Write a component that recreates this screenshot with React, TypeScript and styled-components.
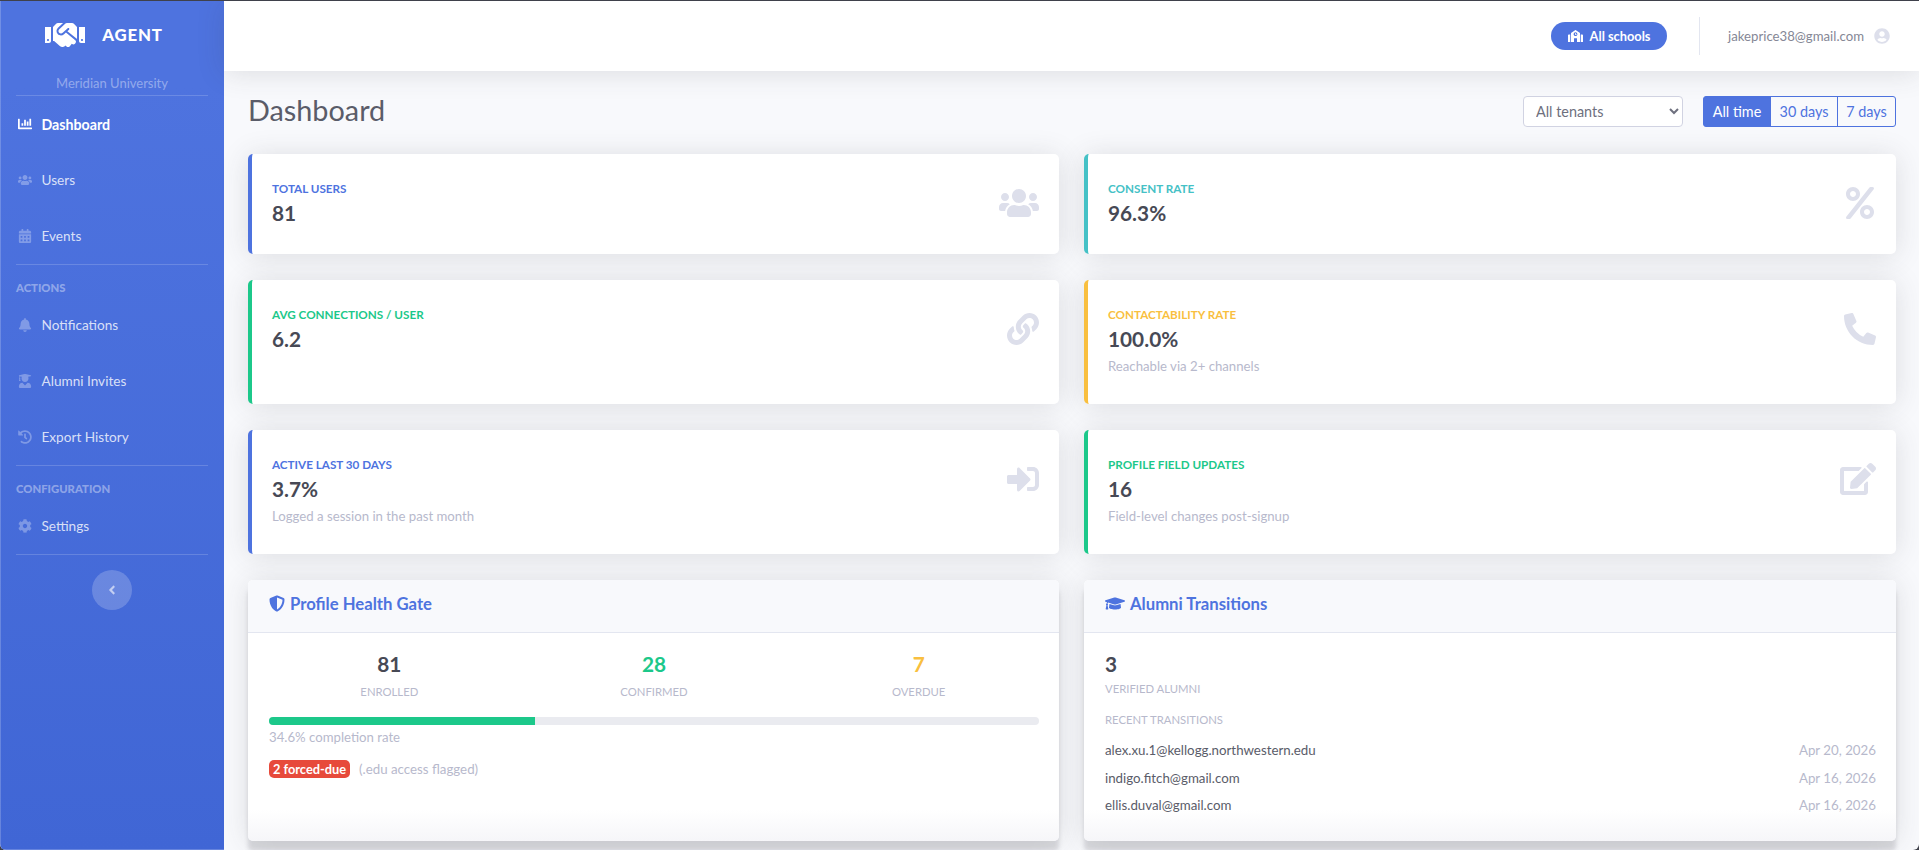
import styled, { createGlobalStyle } from "styled-components";
import type { ReactNode } from "react";
import {
  FaAngleLeft,
  FaBell,
  FaCalendarAlt,
  FaChartBar,
  FaCog,
  FaEdit,
  FaGraduationCap,
  FaHandshake,
  FaHistory,
  FaLink,
  FaPercent,
  FaPhoneAlt,
  FaSchool,
  FaShieldAlt,
  FaSignInAlt,
  FaUserCircle,
  FaUserGraduate,
  FaUsers,
} from "react-icons/fa";

const FONT = `Lato, "Noto Sans", sans-serif`;

const colors = {
  primary: "#4e73df",
  success: "#1cc88a",
  info: "#45c1c6",
  warning: "#f9bf3f",
  danger: "#e74a3b",
  dark: "#474955",
  muted: "#b7b9cc",
  line: "#e3e6f0",
  iconGray: "#dddfeb",
};

const GlobalStyle = createGlobalStyle`
  html, body {
    margin: 0;
    padding: 0;
    height: 100%;
    background: #3f414b;
    overflow: hidden;
  }
  #root {
    height: 100%;
  }
  * {
    box-sizing: border-box;
  }
`;

const Frame = styled.div`
  display: flex;
  height: 849px;
  margin-top: 1px;
  overflow: hidden;
  border-radius: 0 0 6px 6px;
  background: #f8f9fc;
  font-family: ${FONT};
`;

const Sidebar = styled.aside`
  flex: 0 0 224px;
  display: flex;
  flex-direction: column;
  padding: 0 16px;
  background: linear-gradient(180deg, #4e73df 10%, #4066d5 100%);
  box-shadow: inset 1px 0 0 rgba(255, 255, 255, 0.2), inset 0 -1px 0 rgba(255, 255, 255, 0.2);
  color: #fff;
`;

const Brand = styled.div`
  height: 67px;
  display: flex;
  align-items: center;
  justify-content: center;
  gap: 17px;
  padding-right: 16px;
  font-size: 16.8px;
  font-weight: 900;
  letter-spacing: 0.8px;
  svg {
    width: 40px;
    height: 32px;
  }
`;

const SchoolName = styled.div`
  height: 27px;
  padding-top: 6px;
  text-align: center;
  font-size: 13px;
  line-height: 18px;
  color: rgba(255, 255, 255, 0.4);
`;

const SideDivider = styled.hr`
  width: 100%;
  margin: 0;
  border: 0;
  border-top: 1px solid rgba(255, 255, 255, 0.17);
`;

const NavItem = styled.div<{ $active?: boolean }>`
  height: 56px;
  display: flex;
  align-items: center;
  gap: 9.5px;
  padding-left: 2px;
  font-size: ${(p) => (p.$active ? 14.2 : 13.6)}px;
  font-weight: ${(p) => (p.$active ? 700 : 400)};
  color: ${(p) => (p.$active ? "#fff" : "rgba(255, 255, 255, 0.8)")};
  svg {
    width: 14px;
    height: 14px;
    flex: none;
    color: ${(p) => (p.$active ? "#fff" : "rgba(255, 255, 255, 0.3)")};
  }
`;

const NavHeading = styled.div`
  height: 18px;
  margin-top: 14px;
  font-size: 11.3px;
  line-height: 18px;
  font-weight: 900;
  color: rgba(255, 255, 255, 0.4);
  text-transform: uppercase;
`;

const ToggleWrap = styled.div`
  display: flex;
  justify-content: center;
  padding-top: 15px;
`;

const Toggle = styled.button`
  width: 40px;
  height: 40px;
  padding: 0;
  display: flex;
  align-items: center;
  justify-content: center;
  border: 0;
  border-radius: 50%;
  background: rgba(255, 255, 255, 0.2);
  color: rgba(255, 255, 255, 0.6);
  font-size: 14px;
`;

const Main = styled.div`
  flex: 1;
  min-width: 0;
  display: flex;
  flex-direction: column;
`;

const Topbar = styled.header`
  height: 70px;
  flex: none;
  position: relative;
  z-index: 1;
  display: flex;
  align-items: center;
  justify-content: flex-end;
  padding-right: 29px;
  background: #fff;
  box-shadow: 0 2px 28px rgba(58, 59, 69, 0.15);
`;

const SchoolPill = styled.div`
  height: 28px;
  width: 116px;
  display: flex;
  align-items: center;
  justify-content: center;
  gap: 7px;
  border-radius: 14px;
  background: ${colors.primary};
  color: #fff;
  font-size: 12.8px;
  font-weight: 700;
  svg {
    width: 15px;
    height: 12px;
  }
`;

const TopDivider = styled.div`
  width: 1px;
  height: 38px;
  margin: 0 28px 0 32px;
  background: ${colors.line};
`;

const UserEmail = styled.span`
  font-size: 13.2px;
  color: #858796;
`;

const Avatar = styled(FaUserCircle)`
  width: 16px;
  height: 16px;
  margin-left: 10px;
  color: ${colors.iconGray};
`;

const Content = styled.main`
  flex: 1;
  padding: 24px 23px 0 24px;
`;

const TitleRow = styled.div`
  height: 33px;
  margin-bottom: 26px;
  display: flex;
  align-items: center;
`;

const Title = styled.h1`
  flex: 1;
  margin: 0;
  padding-bottom: 2px;
  font-size: 28.8px;
  line-height: 33px;
  font-weight: 400;
  color: #5a5c69;
`;

const TenantSelect = styled.select`
  width: 160px;
  height: 31px;
  padding: 0 8px;
  border: 1px solid #d1d3e2;
  border-radius: 4px;
  background: #fff;
  color: #6e707e;
  font-family: ${FONT};
  font-size: 14.4px;
`;

const RangeGroup = styled.div`
  display: flex;
  margin-left: 20px;
`;

const RangeButton = styled.button<{ $active?: boolean; $w: number }>`
  width: ${(p) => p.$w}px;
  height: 31px;
  padding: 0;
  margin-left: -1px;
  border: 1px solid ${colors.primary};
  background: ${(p) => (p.$active ? colors.primary : "transparent")};
  color: ${(p) => (p.$active ? "#fff" : colors.primary)};
  font-family: ${FONT};
  font-size: 14.4px;
  &:first-child {
    margin-left: 0;
    border-radius: 3px 0 0 3px;
  }
  &:last-child {
    border-radius: 0 3px 3px 0;
  }
`;

const CardGrid = styled.div`
  display: grid;
  grid-template-columns: 811px 812px;
  column-gap: 25px;
  row-gap: 26px;
`;

const StatBox = styled.section<{ $accent: string }>`
  display: flex;
  justify-content: space-between;
  padding: 28px 20px 29px 20px;
  border-left: 4px solid ${(p) => p.$accent};
  border-radius: 5px;
  background: #fff;
  box-shadow: 0 2px 28px rgba(58, 59, 69, 0.15);
`;

const StatLabel = styled.div<{ $accent: string }>`
  height: 14px;
  font-size: 11.7px;
  line-height: 12px;
  font-weight: 700;
  color: ${(p) => p.$accent};
  text-transform: uppercase;
`;

const StatValue = styled.div`
  height: 24px;
  margin-top: 5px;
  font-size: 20.8px;
  line-height: 24px;
  font-weight: 700;
  color: ${colors.dark};
`;

const StatNote = styled.div`
  margin-top: 6px;
  font-size: 13.2px;
  line-height: 18px;
  color: ${colors.muted};
`;

const StatIcon = styled.div<{ $w: number }>`
  height: 32px;
  margin-top: 5px;
  color: ${colors.iconGray};
  svg {
    display: block;
    height: 32px;
    width: ${(p) => p.$w}px;
  }
`;

const Panel = styled.section`
  height: 261px;
  border-radius: 5px;
  overflow: hidden;
  background: linear-gradient(180deg, #fff 88%, #f6f6f9 100%);
  box-shadow: 0 2px 28px rgba(58, 59, 69, 0.15), 0 10px 4px 0 rgba(58, 59, 69, 0.16);
`;

const PanelHead = styled.div`
  height: 53px;
  display: flex;
  align-items: center;
  gap: 5px;
  padding: 0 0 5px 21px;
  background: #f8f9fc;
  border-bottom: 1px solid ${colors.line};
  color: ${colors.primary};
  font-size: 16.7px;
  font-weight: 700;
`;

const HeadIcon = styled.span<{ $w: number }>`
  display: flex;
  svg {
    width: ${(p) => p.$w}px;
    height: 17px;
  }
`;

const PanelBody = styled.div`
  padding: 19px 20px 0 21px;
`;

const TripleStats = styled.div`
  display: grid;
  grid-template-columns: repeat(3, 1fr);
  margin: 0 -12px;
  text-align: center;
`;

const BigNumber = styled.div<{ $color?: string }>`
  height: 24px;
  font-size: 20.8px;
  line-height: 24px;
  font-weight: 700;
  color: ${(p) => p.$color ?? colors.dark};
`;

const SmallCaps = styled.div`
  margin-top: 8px;
  font-size: 11.3px;
  line-height: 16px;
  color: ${colors.muted};
  text-transform: uppercase;
`;

const ProgressTrack = styled.div`
  height: 8px;
  margin-top: 17px;
  border-radius: 4px;
  overflow: hidden;
  background: #eaebf0;
`;

const ProgressFill = styled.div`
  height: 100%;
  background: ${colors.success};
`;

const ProgressNote = styled.div`
  margin-top: 3px;
  font-size: 13.2px;
  line-height: 18px;
  color: ${colors.muted};
`;

const FlagRow = styled.div`
  display: flex;
  align-items: center;
  gap: 9px;
  margin-top: 14px;
  font-size: 13.3px;
  color: ${colors.muted};
`;

const Badge = styled.span`
  height: 18px;
  width: 81px;
  display: flex;
  align-items: center;
  justify-content: center;
  border-radius: 5px;
  background: ${colors.danger};
  color: #fff;
  font-size: 12.8px;
  font-weight: 700;
`;

const AlumniLabel = styled(SmallCaps)`
  margin-top: 5px;
`;

const RecentLabel = styled(SmallCaps)`
  margin: 15px 0 8.5px;
`;

const TransitionRow = styled.div`
  height: 27.5px;
  display: flex;
  align-items: center;
  justify-content: space-between;
  font-size: 13.3px;
  color: #5a5c69;
  span:last-child {
    color: ${colors.muted};
  }
`;

interface StatProps {
  label: string;
  value: string;
  note?: string;
  accent: string;
  icon: ReactNode;
  iconWidth?: number;
}

const Stat = ({ label, value, note, accent, icon, iconWidth = 32 }: StatProps) => (
  <StatBox $accent={accent}>
    <div>
      <StatLabel $accent={accent}>{label}</StatLabel>
      <StatValue>{value}</StatValue>
      {note && <StatNote>{note}</StatNote>}
    </div>
    <StatIcon $w={iconWidth}>{icon}</StatIcon>
  </StatBox>
);

const transitions = [
  ["alex.xu.1@kellogg.northwestern.edu", "Apr 20, 2026"],
  ["indigo.fitch@gmail.com", "Apr 16, 2026"],
  ["ellis.duval@gmail.com", "Apr 16, 2026"],
];

const App = () => {
  return (
    <>
      <GlobalStyle />
      <Frame>
        <Sidebar>
          <Brand>
            <FaHandshake />
            AGENT
          </Brand>
          <SchoolName>Meridian University</SchoolName>
          <SideDivider />
          <NavItem $active>
            <FaChartBar />
            Dashboard
          </NavItem>
          <NavItem>
            <FaUsers />
            Users
          </NavItem>
          <NavItem>
            <FaCalendarAlt />
            Events
          </NavItem>
          <SideDivider />
          <NavHeading>Actions</NavHeading>
          <NavItem>
            <FaBell />
            Notifications
          </NavItem>
          <NavItem>
            <FaUserGraduate />
            Alumni Invites
          </NavItem>
          <NavItem>
            <FaHistory />
            Export History
          </NavItem>
          <SideDivider />
          <NavHeading>Configuration</NavHeading>
          <NavItem>
            <FaCog />
            Settings
          </NavItem>
          <SideDivider />
          <ToggleWrap>
            <Toggle aria-label="Toggle sidebar">
              <FaAngleLeft />
            </Toggle>
          </ToggleWrap>
        </Sidebar>
        <Main>
          <Topbar>
            <SchoolPill>
              <FaSchool />
              All schools
            </SchoolPill>
            <TopDivider />
            <UserEmail>jakeprice38@gmail.com</UserEmail>
            <Avatar />
          </Topbar>
          <Content>
            <TitleRow>
              <Title>Dashboard</Title>
              <TenantSelect defaultValue="all">
                <option value="all">All tenants</option>
              </TenantSelect>
              <RangeGroup>
                <RangeButton $active $w={68}>
                  All time
                </RangeButton>
                <RangeButton $w={68}>30 days</RangeButton>
                <RangeButton $w={59}>7 days</RangeButton>
              </RangeGroup>
            </TitleRow>
            <CardGrid>
              <Stat label="Total Users" value="81" accent={colors.primary} icon={<FaUsers />} iconWidth={40} />
              <Stat label="Consent Rate" value="96.3%" accent={colors.info} icon={<FaPercent />} />
              <Stat label="Avg Connections / User" value="6.2" accent={colors.success} icon={<FaLink />} />
              <Stat
                label="Contactability Rate"
                value="100.0%"
                note="Reachable via 2+ channels"
                accent={colors.warning}
                icon={<FaPhoneAlt />}
              />
              <Stat
                label="Active Last 30 Days"
                value="3.7%"
                note="Logged a session in the past month"
                accent={colors.primary}
                icon={<FaSignInAlt />}
              />
              <Stat
                label="Profile Field Updates"
                value="16"
                note="Field-level changes post-signup"
                accent={colors.success}
                icon={<FaEdit />}
                iconWidth={36}
              />
              <Panel>
                <PanelHead>
                  <HeadIcon $w={16}>
                    <FaShieldAlt />
                  </HeadIcon>
                  Profile Health Gate
                </PanelHead>
                <PanelBody>
                  <TripleStats>
                    <div>
                      <BigNumber>81</BigNumber>
                      <SmallCaps>Enrolled</SmallCaps>
                    </div>
                    <div>
                      <BigNumber $color={colors.success}>28</BigNumber>
                      <SmallCaps>Confirmed</SmallCaps>
                    </div>
                    <div>
                      <BigNumber $color={colors.warning}>7</BigNumber>
                      <SmallCaps>Overdue</SmallCaps>
                    </div>
                  </TripleStats>
                  <ProgressTrack>
                    <ProgressFill style={{ width: "34.6%" }} />
                  </ProgressTrack>
                  <ProgressNote>34.6% completion rate</ProgressNote>
                  <FlagRow>
                    <Badge>2 forced-due</Badge>
                    (.edu access flagged)
                  </FlagRow>
                </PanelBody>
              </Panel>
              <Panel>
                <PanelHead>
                  <HeadIcon $w={20}>
                    <FaGraduationCap />
                  </HeadIcon>
                  Alumni Transitions
                </PanelHead>
                <PanelBody>
                  <BigNumber>3</BigNumber>
                  <AlumniLabel>Verified alumni</AlumniLabel>
                  <RecentLabel>Recent transitions</RecentLabel>
                  {transitions.map(([email, date]) => (
                    <TransitionRow key={email}>
                      <span>{email}</span>
                      <span>{date}</span>
                    </TransitionRow>
                  ))}
                </PanelBody>
              </Panel>
            </CardGrid>
          </Content>
        </Main>
      </Frame>
    </>
  );
};

export default App;
